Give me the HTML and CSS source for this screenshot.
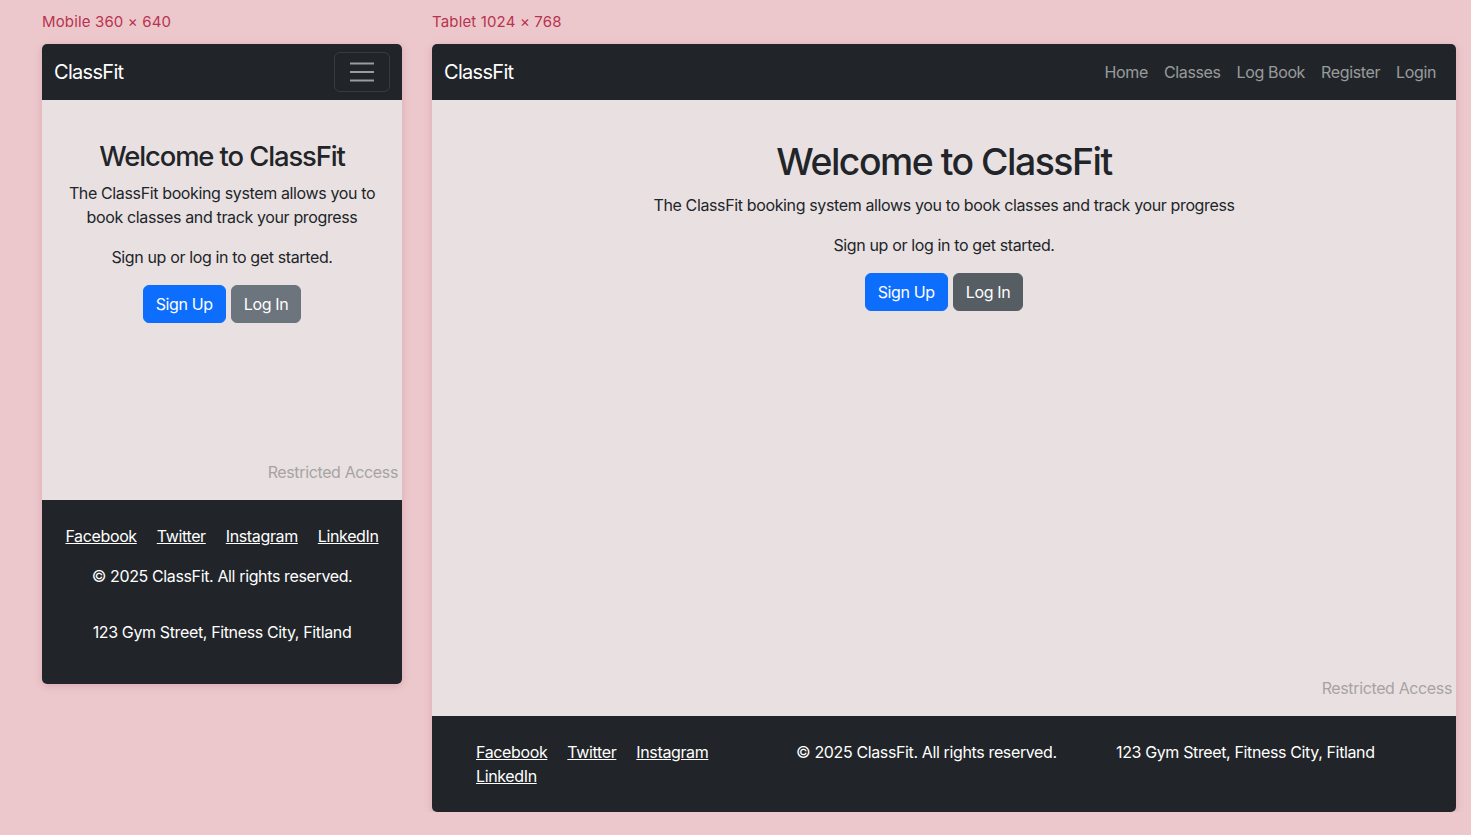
FILE: index.html
```html
<!DOCTYPE html>
<html lang="en">
<head>
<meta charset="utf-8">
<title>ClassFit responsive preview</title>
<link rel="stylesheet" href="styles.css">
</head>
<body>
  <div class="device device-mobile">
    <div class="device-label">Mobile 360 × 640</div>
    <div class="frame frame-mobile">
      <nav class="navbar">
        <span class="brand">ClassFit</span>
        <button class="toggler" type="button" aria-label="Toggle navigation">
          <svg width="24" height="24" viewBox="0 0 24 24" aria-hidden="true">
            <path d="M0 3.5h24M0 12h24M0 20.5h24" stroke="rgba(255,255,255,0.55)" stroke-width="2" fill="none"/>
          </svg>
        </button>
      </nav>
      <main class="main">
        <section class="hero">
          <h1 class="hero-title">Welcome to ClassFit</h1>
          <p class="hero-text">The ClassFit booking system allows you to book classes and track your progress</p>
          <p class="hero-text">Sign up or log in to get started.</p>
          <div class="hero-actions">
            <a class="btn btn-primary" href="#">Sign Up</a>
            <a class="btn btn-secondary" href="#">Log In</a>
          </div>
        </section>
        <p class="restricted">Restricted Access</p>
      </main>
      <footer class="footer footer-mobile">
        <div class="social">
          <a href="#">Facebook</a>
          <a href="#">Twitter</a>
          <a href="#">Instagram</a>
          <a href="#">LinkedIn</a>
        </div>
        <p class="copy">© 2025 ClassFit. All rights reserved.</p>
        <p class="address">123 Gym Street, Fitness City, Fitland</p>
      </footer>
    </div>
  </div>

  <div class="device device-tablet">
    <div class="device-label">Tablet 1024 × 768</div>
    <div class="frame frame-tablet">
      <nav class="navbar">
        <span class="brand">ClassFit</span>
        <ul class="nav-links">
          <li><a href="#">Home</a></li>
          <li><a href="#">Classes</a></li>
          <li><a href="#">Log Book</a></li>
          <li><a href="#">Register</a></li>
          <li><a href="#">Login</a></li>
        </ul>
      </nav>
      <main class="main">
        <section class="hero">
          <h1 class="hero-title">Welcome to ClassFit</h1>
          <p class="hero-text">The ClassFit booking system allows you to book classes and track your progress</p>
          <p class="hero-text">Sign up or log in to get started.</p>
          <div class="hero-actions">
            <a class="btn btn-primary" href="#">Sign Up</a>
            <a class="btn btn-secondary btn-hover" href="#">Log In</a>
          </div>
        </section>
        <p class="restricted">Restricted Access</p>
      </main>
      <footer class="footer footer-tablet">
        <div class="footer-grid">
          <div class="footer-col">
            <div class="social">
              <a href="#">Facebook</a>
              <a href="#">Twitter</a>
              <a href="#">Instagram</a>
              <a href="#">LinkedIn</a>
            </div>
          </div>
          <div class="footer-col">
            <p class="copy">© 2025 ClassFit. All rights reserved.</p>
          </div>
          <div class="footer-col">
            <p class="address">123 Gym Street, Fitness City, Fitland</p>
          </div>
        </div>
      </footer>
    </div>
  </div>
</body>
</html>
```
FILE: styles.css
```css
* {
  box-sizing: border-box;
}

body {
  margin: 0;
  padding: 12px 0 0 42px;
  background: #ecc8cc;
  font-family: Inter, "Noto Sans", "Liberation Sans", sans-serif;
  font-size: 16px;
  line-height: 24px;
  letter-spacing: -0.023em;
  color: #212529;
  display: flex;
  align-items: flex-start;
  gap: 30px;
}

.device {
  display: flex;
  flex-direction: column;
}

.device-label {
  font-size: 15px;
  line-height: 20px;
  letter-spacing: 0.01em;
  color: #b8334f;
  margin-bottom: 12px;
}

.frame {
  display: flex;
  flex-direction: column;
  border-radius: 5px;
  overflow: hidden;
  background: #e9e1e1;
  box-shadow: 0 2px 8px rgba(120, 40, 50, 0.18);
}

.frame-mobile {
  width: 360px;
  height: 640px;
}

.frame-tablet {
  width: 1024px;
  height: 768px;
}

.navbar {
  height: 56px;
  background: #212529;
  display: flex;
  align-items: center;
  justify-content: space-between;
  padding: 0 12px;
  flex-shrink: 0;
}

.brand {
  color: #fff;
  font-size: 20px;
  line-height: 30px;
  letter-spacing: -0.035em;
}

.toggler {
  width: 56px;
  height: 40px;
  border: 1px solid rgba(255, 255, 255, 0.1);
  border-radius: 6px;
  background: transparent;
  display: flex;
  align-items: center;
  justify-content: center;
  padding: 0;
}

.toggler svg {
  display: block;
}

.nav-links {
  list-style: none;
  margin: 0;
  padding: 0;
  display: flex;
}

.nav-links a {
  display: block;
  padding: 8px 8px;
  color: rgba(255, 255, 255, 0.55);
  text-decoration: none;
}

.main {
  flex: 1;
  display: flex;
  flex-direction: column;
}

.hero {
  padding: 40px 12px 0;
  text-align: center;
}

.hero-title {
  margin: 0 0 8px;
  font-weight: 500;
  line-height: 1.2;
  letter-spacing: -0.04em;
}

.frame-mobile .hero-title {
  font-size: 27.4px;
}

.frame-tablet .hero-title {
  font-size: 37.4px;
}

.hero-text {
  margin: 0 0 16px;
}

.hero-actions {
  display: flex;
  justify-content: center;
  gap: 5px;
}

.btn {
  display: inline-block;
  padding: 6px 12px;
  border: 1px solid transparent;
  border-radius: 6px;
  color: #fff;
  text-decoration: none;
  line-height: 24px;
}

.btn-primary {
  background: #0d6efd;
  border-color: #0d6efd;
}

.btn-secondary {
  background: #6c757d;
  border-color: #6c757d;
}

.btn-hover {
  background: #565e64;
  border-color: #565e64;
}

.restricted {
  margin: auto 0 16px;
  padding-right: 4px;
  text-align: right;
  color: #a7a3a3;
}

.footer {
  background: #212529;
  color: #fff;
  flex-shrink: 0;
}

.footer p {
  margin: 0;
}

.social a {
  color: #fff;
  text-decoration: underline;
}

.footer-mobile {
  padding: 24px 12px;
  text-align: center;
}

.footer-mobile .social {
  display: flex;
  justify-content: center;
  gap: 20px;
  margin-bottom: 16px;
}

.footer-mobile .copy {
  margin-bottom: 32px;
}

.footer-mobile .address {
  margin-bottom: 16px;
}

.footer-tablet {
  padding: 24px 0;
}

.footer-grid {
  width: 960px;
  margin: 0 auto;
  display: grid;
  grid-template-columns: repeat(3, 320px);
}

.footer-col {
  padding: 0 12px;
}

.footer-tablet .social {
  display: flex;
  flex-wrap: wrap;
  column-gap: 20px;
}
```
